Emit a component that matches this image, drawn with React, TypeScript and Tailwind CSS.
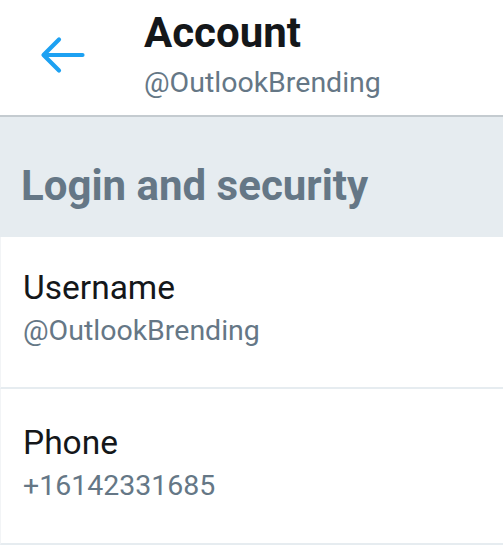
import React from 'react';

const rows = [
  {
    label: 'Username',
    value: '@OutlookBrending',
    rowClass: 'h-[152px] pt-[34px]',
    valueClass: 'mt-[12px]',
  },
  {
    label: 'Phone',
    value: '+16142331685',
    rowClass: 'h-[156px] pt-[37px]',
    valueClass: 'mt-[12px]',
  },
];

const App = () => {
  return (
    <div
      className="w-[503px] h-[560px] overflow-hidden bg-white"
      style={{ fontFamily: 'Roboto, "Liberation Sans", sans-serif' }}
    >
      {/* Header */}
      <div className="h-[117px] flex items-start border-b-2 border-[#c4cbd0]">
        <div className="w-[144px] shrink-0 pl-[38px] pt-[35px]">
          <svg width="48" height="40" viewBox="0 0 48 40" fill="none">
            <path
              d="M44.5 20H6M21 4.5L5.5 20L21 35.5"
              stroke="#1da1f2"
              strokeWidth="4.2"
              strokeLinecap="round"
              strokeLinejoin="round"
            />
          </svg>
        </div>
        <div className="flex flex-col pt-[12px]">
          <span className="text-[42px] leading-[42px] font-bold text-[#14171a]">Account</span>
          <span className="mt-[15px] text-[28.5px] leading-[28px] text-[#657786]">@OutlookBrending</span>
        </div>
      </div>

      {/* Section title */}
      <div className="h-[120px] bg-[#e6ecf0] px-[21px] pt-[48px]">
        <h2 className="text-[42px] leading-[42px] font-bold text-[#657786]">Login and security</h2>
      </div>

      {/* Rows */}
      {rows.map((row) => (
        <div
          key={row.label}
          className={`${row.rowClass} flex flex-col px-[22px] border-b-2 border-[#e6ecf0] border-l border-l-[#f2f4f6]`}
        >
          <span className="text-[33.5px] leading-[34px] text-[#14171a]">{row.label}</span>
          <span className={`${row.valueClass} text-[28.5px] leading-[28px] text-[#657786]`}>{row.value}</span>
        </div>
      ))}
    </div>
  );
};

export default App;
